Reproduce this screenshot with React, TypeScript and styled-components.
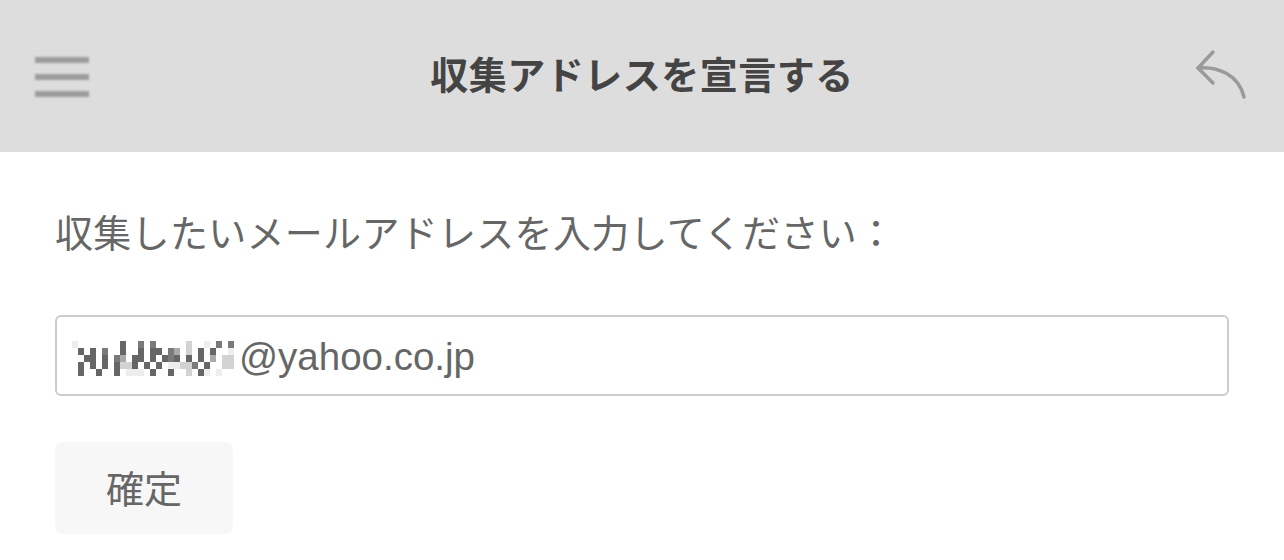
import React from 'react';
import styled, { createGlobalStyle } from 'styled-components';

const GlobalStyle = createGlobalStyle`
  html, body {
    margin: 0;
    padding: 0;
    background: #ffffff;
    font-family: "Noto Sans CJK JP", "Noto Sans", sans-serif;
  }
`;

const Header = styled.header`
  height: 152px;
  background: #dddddd;
  display: flex;
  align-items: center;
  justify-content: space-between;
  padding: 0 33px 0 35px;
  box-sizing: border-box;
`;

const Burger = styled.div`
  width: 54px;
  display: flex;
  flex-direction: column;
  gap: 11px;
  padding-top: 2px;
`;

const BurgerLine = styled.span`
  display: block;
  height: 6px;
  background: #9c9c9c;
  filter: blur(0.8px);
`;

const Title = styled.h1`
  margin: -8px 0 0;
  font-size: 38px;
  font-weight: 700;
  color: #444444;
  letter-spacing: 0.5px;
  padding-left: 4px;
`;

const BackButton = styled.div`
  width: 60px;
  height: 60px;
  margin-top: -2px;
`;

const Content = styled.main`
  padding: 56px 55px 0;
`;

const Label = styled.p`
  margin: 0;
  font-size: 38px;
  line-height: 46px;
  color: #666666;
  font-weight: 400;
  letter-spacing: 0.3px;
`;

const Field = styled.div`
  margin-top: 61px;
  height: 81px;
  box-sizing: border-box;
  border: 2px solid #cccccc;
  border-radius: 6px;
  display: flex;
  align-items: center;
  padding: 0 15px;
`;

const FieldText = styled.span`
  font-family: "Liberation Sans", Arial, sans-serif;
  font-size: 38.5px;
  color: #666666;
  margin-top: 2px;
`;

const Confirm = styled.button`
  margin-top: 46px;
  width: 178px;
  height: 92px;
  border: none;
  border-radius: 8px;
  background: #f7f7f7;
  color: #666666;
  font-family: "Noto Sans CJK JP", "Noto Sans", sans-serif;
  font-size: 38px;
  padding: 0 0 4px;
`;

// pixel mosaic covering the local part of the address
const mosaic = [
  'a.......e..d.d.....b..a.d.d.',
  '.e.e.d..e..e.ee.dc.b.e.e..a.',
  '..ee.e.dc.ee.e.ede.e.e.c.bb.',
  '.e.e.e.ebbe.e.e.aabbd.e..bb.',
  '.e..e..e.aaa.e..e..b.ea.a...',
];

const shades: Record<string, string> = {
  a: '#eeeeee',
  b: '#d2d2d2',
  c: '#aaaaaa',
  d: '#7a7a7a',
  e: '#666666',
};

function Mosaic() {
  return (
    <svg width="167" height="36" viewBox="0 0 167 36" style={{ marginTop: 4 }}>
      {mosaic.map((row, r) =>
        row.split('').map((ch, c) =>
          ch === '.' ? null : (
            <rect key={`${r}-${c}`} x={c * 6} y={r * 7 + 1} width="6" height="7" fill={shades[ch]} />
          )
        )
      )}
    </svg>
  );
}

function App() {
  return (
    <>
      <GlobalStyle />
      <Header>
        <Burger>
          <BurgerLine />
          <BurgerLine />
          <BurgerLine />
        </Burger>
        <Title>収集アドレスを宣言する</Title>
        <BackButton>
          <svg width="60" height="60" viewBox="0 0 60 60" fill="none" stroke="#9a9a9a" strokeWidth="3.5" strokeLinecap="round" strokeLinejoin="round">
            <path d="M22 7 L7 23 L22 38" />
            <path d="M7 23 C27 21 48 30 53 52" />
          </svg>
        </BackButton>
      </Header>
      <Content>
        <Label>収集したいメールアドレスを入力してください：</Label>
        <Field>
          <Mosaic />
          <FieldText>@yahoo.co.jp</FieldText>
        </Field>
        <Confirm>確定</Confirm>
      </Content>
    </>
  );
}

export default App;
